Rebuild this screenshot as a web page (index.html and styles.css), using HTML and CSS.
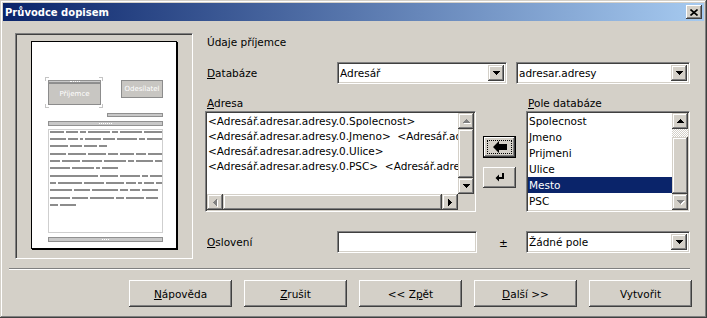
FILE: index.html
```html
<!DOCTYPE html>
<html lang="cs">
<head>
  <meta charset="UTF-8" />
  <title>Průvodce dopisem</title>
  <link rel="stylesheet" href="styles.css">
</head>
<body>

<svg class="defs" width="0" height="0">
  <symbol id="a-down" viewBox="0 0 7 4"><path d="M0 0h7v1H0zM1 1h5v1H1zM2 2h3v1H2zM3 3h1v1H3z"/></symbol>
  <symbol id="a-up" viewBox="0 0 7 4"><path d="M3 0h1v1H3zM2 1h3v1H2zM1 2h5v1H1zM0 3h7v1H0z"/></symbol>
  <symbol id="a-left" viewBox="0 0 4 7"><path d="M0 3h1v1H0zM1 2h1v3H1zM2 1h1v5H2zM3 0h1v7H3z"/></symbol>
  <symbol id="a-right" viewBox="0 0 4 7"><path d="M0 0h1v7H0zM1 1h1v5H1zM2 2h1v3H2zM3 3h1v1H3z"/></symbol>
</svg>

<div class="window">
  <div class="titlebar">
    <span class="title">Průvodce dopisem</span>
    <span class="close"><svg width="8" height="7" viewBox="0 0 8 7"><path d="M0.5 0.5L7.5 6.5M7.5 0.5L0.5 6.5"/></svg></span>
  </div>

  <div class="content">
    <!-- náhled dopisu -->
    <div class="preview">
      <div class="page">
        <div class="marks"></div>
        <div class="bar recip-bar"><i></i></div>
        <div class="box recip-box">Příjemce</div>
        <div class="box sender-box">Odesílatel</div>
        <div class="bar date-bar"></div>
        <div class="bar greet-bar"><i></i></div>
        <div class="text-frame">
          <div class="para">
            <div class="line"><b style="width:14px"></b><b style="width:12px"></b><b style="width:6px"></b><b style="width:22px"></b><b style="width:6px"></b><b style="width:22px"></b><b style="width:18px"></b></div>
            <div class="line"><b style="width:16px"></b><b style="width:10px"></b><b style="width:3px"></b><b style="width:16px"></b><b style="width:12px"></b><b style="width:20px"></b><b style="width:6px"></b><b style="width:15px"></b></div>
            <div class="line"><b style="width:18px"></b><b style="width:12px"></b><b style="width:13px"></b><b style="width:8px"></b></div>
          </div>
          <div class="para">
            <div class="line"><b style="width:16px"></b><b style="width:18px"></b><b style="width:18px"></b><b style="width:10px"></b><b style="width:14px"></b><b style="width:10px"></b><b style="width:14px"></b></div>
            <div class="line"><b style="width:10px"></b><b style="width:18px"></b><b style="width:20px"></b><b style="width:22px"></b><b style="width:6px"></b><b style="width:17px"></b><b style="width:7px"></b></div>
            <div class="line"><b style="width:20px"></b><b style="width:22px"></b><b style="width:4px"></b><b style="width:16px"></b></div>
          </div>
          <div class="para">
            <div class="line"><b style="width:48px"></b><b style="width:18px"></b><b style="width:20px"></b><b style="width:6px"></b><b style="width:12px"></b></div>
            <div class="line"><b style="width:6px"></b><b style="width:24px"></b><b style="width:20px"></b><b style="width:18px"></b><b style="width:10px"></b><b style="width:4px"></b><b style="width:10px"></b><b style="width:6px"></b></div>
            <div class="line"><b style="width:22px"></b><b style="width:16px"></b><b style="width:26px"></b><b style="width:8px"></b><b style="width:10px"></b><b style="width:16px"></b></div>
          </div>
          <div class="para">
            <div class="line"><b style="width:20px"></b><b style="width:16px"></b><b style="width:24px"></b><b style="width:8px"></b><b style="width:18px"></b><b style="width:12px"></b></div>
            <div class="line"><b style="width:8px"></b><b style="width:16px"></b></div>
          </div>
        </div>
        <div class="bar foot-bar"><i></i></div>
      </div>
    </div>

    <div class="form">
      <div class="heading">Údaje příjemce</div>

      <div class="row">
        <span class="label"><u>D</u>atabáze</span>
        <div class="combo combo-db">
          <span class="value">Adresář</span>
          <span class="drop"><svg class="ar" width="7" height="4"><use href="#a-down"/></svg></span>
        </div>
        <div class="combo combo-table">
          <span class="value">adresar.adresy</span>
          <span class="drop"><svg class="ar" width="7" height="4"><use href="#a-down"/></svg></span>
        </div>
      </div>

      <div class="fields">
        <div class="col-address">
          <div class="caption"><u>A</u>dresa</div>
          <div class="listbox address">
            <div class="entries">
              <div>&lt;Adresář.adresar.adresy.0.Spolecnost&gt;</div>
              <div>&lt;Adresář.adresar.adresy.0.Jmeno&gt;&nbsp;&nbsp;&lt;Adresář.adresar.adresy.0.Prijmeni&gt;</div>
              <div>&lt;Adresář.adresar.adresy.0.Ulice&gt;</div>
              <div>&lt;Adresář.adresar.adresy.0.PSC&gt;&nbsp;&nbsp;&lt;Adresář.adresar.adresy.0.Mesto&gt;</div>
            </div>
            <div class="vscroll">
              <span class="sbtn"><svg class="ar off" width="7" height="4"><use href="#a-up"/></svg></span>
              <span class="thumb"></span>
              <span class="sbtn"><svg class="ar" width="7" height="4"><use href="#a-down"/></svg></span>
            </div>
            <div class="hscroll">
              <span class="sbtn"><svg class="ar off" width="4" height="7"><use href="#a-left"/></svg></span>
              <span class="thumb"></span>
              <span class="sbtn"><svg class="ar" width="4" height="7"><use href="#a-right"/></svg></span>
            </div>
            <div class="corner"></div>
          </div>
        </div>

        <div class="col-tools">
          <span class="tool focused">
            <svg width="14" height="12" viewBox="0 0 14 12"><path d="M0 6L6 0V3H14V9H6V12Z"/></svg>
          </span>
          <span class="tool">
            <svg width="9" height="9" viewBox="0 0 9 9"><path d="M7 0H9V6H4V8.5L0.5 5L4 1.5V4H7Z"/></svg>
          </span>
        </div>

        <div class="col-fields">
          <div class="caption"><u>P</u>ole databáze</div>
          <div class="listbox fieldlist">
            <div class="items">
              <div>Spolecnost</div>
              <div>Jmeno</div>
              <div>Prijmeni</div>
              <div>Ulice</div>
              <div class="selected">Mesto</div>
              <div>PSC</div>
            </div>
            <div class="vscroll">
              <span class="sbtn"><svg class="ar" width="7" height="4"><use href="#a-up"/></svg></span>
              <span class="track"></span>
              <span class="thumb"></span>
              <span class="sbtn"><svg class="ar off" width="7" height="4"><use href="#a-down"/></svg></span>
            </div>
          </div>
        </div>
      </div>

      <div class="row row-greeting">
        <span class="label"><u>O</u>slovení</span>
        <div class="textbox"></div>
        <span class="plusminus">±</span>
        <div class="combo combo-greet">
          <span class="value">Žádné pole</span>
          <span class="drop"><svg class="ar" width="7" height="4"><use href="#a-down"/></svg></span>
        </div>
      </div>
    </div>
  </div>

  <div class="separator"></div>

  <div class="buttons">
    <span class="btn"><u>N</u>ápověda</span>
    <span class="btn"><u>Z</u>rušit</span>
    <span class="btn">&lt;&lt; Z<u>p</u>ět</span>
    <span class="btn"><u>D</u>alší &gt;&gt;</span>
    <span class="btn">Vytvořit</span>
  </div>
</div>

</body>
</html>
```

FILE: styles.css
```css
* {
  box-sizing: border-box;
}
body {
  margin: 0;
  font-family: "DejaVu Sans", sans-serif;
  font-size: 10.5px;
  color: #000;
  background: #d4d0c8;
}
u {
  text-decoration: underline;
  text-underline-offset: 1px;
}
.defs {
  position: absolute;
}
.ar {
  display: block;
  fill: #000;
  shape-rendering: crispEdges;
}
.ar.off {
  fill: #808080;
  filter: drop-shadow(1px 1px 0 #fff);
}

/* rámy ve stylu Windows */
.raised {
  box-shadow: inset -1px -1px #404040, inset 1px 1px #fff, inset -2px -2px #808080;
}
.window {
  width: 707px;
  height: 318px;
  padding: 3px;
  background: #d4d0c8;
  box-shadow: inset -1px -1px #404040, inset 1px 1px #d4d0c8, inset -2px -2px #808080, inset 2px 2px #fff;
}
.titlebar {
  height: 18px;
  display: flex;
  align-items: center;
  justify-content: space-between;
  padding: 0 2px;
  background: linear-gradient(to right, #0a246a, #a6caf0);
}
.title {
  color: #fff;
  font-weight: bold;
  font-size: 10px;
}
.close {
  width: 16px;
  height: 14px;
  display: flex;
  align-items: center;
  justify-content: center;
  background: #d4d0c8;
  box-shadow: inset -1px -1px #404040, inset 1px 1px #fff, inset -2px -2px #808080;
}
.close svg {
  stroke: #000;
  stroke-width: 1.6;
}

.content {
  display: flex;
  height: 238px;
  padding: 12px 0 0 12px;
}

/* náhled */
.preview {
  width: 178px;
  height: 226px;
  padding: 7px 0 0 15px;
  border: 1px solid;
  border-color: #808080 #fff #fff #808080;
  box-shadow: inset 1px 1px #404040, inset -1px -1px #d4d0c8;
}
.page {
  position: relative;
  width: 146px;
  height: 208px;
  background: #fff;
  border: 1px solid #000;
  box-shadow: 1px 1px 0 #000;
}
.marks {
  position: absolute;
  left: 13px;
  top: 35px;
  width: 58px;
  height: 31px;
  background:
    linear-gradient(#c4c4c4, #c4c4c4) left top / 4px 1px no-repeat,
    linear-gradient(#c4c4c4, #c4c4c4) left top / 1px 4px no-repeat,
    linear-gradient(#c4c4c4, #c4c4c4) right top / 4px 1px no-repeat,
    linear-gradient(#c4c4c4, #c4c4c4) right top / 1px 4px no-repeat,
    linear-gradient(#c4c4c4, #c4c4c4) left bottom / 4px 1px no-repeat,
    linear-gradient(#c4c4c4, #c4c4c4) left bottom / 1px 4px no-repeat,
    linear-gradient(#c4c4c4, #c4c4c4) right bottom / 4px 1px no-repeat,
    linear-gradient(#c4c4c4, #c4c4c4) right bottom / 1px 4px no-repeat;
}
.bar {
  position: absolute;
  display: flex;
  justify-content: center;
  align-items: center;
  background: #c8c8c8;
  border: 1px solid #909090;
}
.bar i {
  width: 10px;
  border-top: 1px dotted #fff;
}
.recip-bar {
  left: 16px;
  top: 38px;
  width: 53px;
  height: 3px;
}
.date-bar {
  left: 75px;
  top: 71px;
  width: 56px;
  height: 4px;
}
.greet-bar {
  left: 16px;
  top: 79px;
  width: 115px;
  height: 5px;
}
.greet-bar i {
  width: 13px;
}
.foot-bar {
  left: 16px;
  top: 195px;
  width: 115px;
  height: 5px;
}
.foot-bar i {
  width: 7px;
}
.box {
  position: absolute;
  display: flex;
  align-items: center;
  justify-content: center;
  background: #c8c6c2;
  border: 1px solid #8c8c8c;
  color: #fff;
  font-size: 7px;
}
.recip-box {
  left: 16px;
  top: 41px;
  width: 53px;
  height: 22px;
}
.sender-box {
  left: 89px;
  top: 38px;
  width: 42px;
  height: 18px;
}
.text-frame {
  position: absolute;
  left: 16px;
  top: 87px;
  width: 115px;
  height: 104px;
  padding: 1px 0 0 1px;
  border: 1px solid #cfcfcf;
}
.para + .para {
  margin-top: 6px;
}
.line {
  display: flex;
  gap: 2px;
  height: 2px;
}
.line + .line {
  margin-top: 5px;
}
.line b {
  background: #8c8c8c;
}

/* formulář */
.form {
  margin-left: 12px;
  width: 486px;
  display: flex;
  flex-direction: column;
}
.heading {
  margin-top: 2px;
  line-height: 14px;
  padding-left: 2px;
}
.row {
  display: flex;
  align-items: center;
  height: 22px;
  margin-top: 13px;
}
.label {
  width: 132px;
  padding-left: 2px;
}
.combo {
  display: flex;
  height: 22px;
  padding: 2px;
  background: #fff;
  border: 1px solid;
  border-color: #808080 #fff #fff #808080;
  box-shadow: inset 1px 1px #404040, inset -1px -1px #d4d0c8;
}
.combo .value {
  flex: 1;
  padding-left: 0;
  line-height: 16px;
  white-space: nowrap;
}
.drop, .sbtn {
  display: flex;
  align-items: center;
  justify-content: center;
  width: 16px;
  height: 16px;
  flex: none;
  background: #d4d0c8;
  box-shadow: inset -1px -1px #404040, inset 1px 1px #d4d0c8, inset -2px -2px #808080, inset 2px 2px #fff;
}
.drop {
  height: 16px;
}
.combo-db {
  width: 170px;
}
.combo-table {
  width: 174px;
  margin-left: 9px;
}
.combo-greet {
  width: 164px;
}

.fields {
  display: flex;
  margin-top: 12px;
}
.caption {
  line-height: 14px;
  margin-bottom: 1px;
  padding-left: 2px;
}
.col-address {
  width: 271px;
}
.col-tools {
  width: 33px;
  margin-left: 7px;
  padding-top: 40px;
  display: flex;
  flex-direction: column;
}
.col-fields {
  width: 164px;
  margin-left: 10px;
}
.listbox {
  display: grid;
  height: 101px;
  padding: 1px;
  background: #fff;
  border: 1px solid;
  border-color: #808080 #fff #fff #808080;
  box-shadow: inset 1px 1px #404040, inset -1px -1px #d4d0c8;
}
.address {
  grid-template-columns: 1fr 16px;
  grid-template-rows: 1fr 16px;
}
.entries {
  padding: 1px 0 0 1px;
  line-height: 15px;
  white-space: nowrap;
  overflow: hidden;
}
.vscroll {
  display: flex;
  flex-direction: column;
  background: #d4d0c8;
}
.hscroll {
  display: flex;
  background: #d4d0c8;
}
.thumb {
  flex: 1;
  background: #d4d0c8;
  box-shadow: inset -1px -1px #404040, inset 1px 1px #d4d0c8, inset -2px -2px #808080, inset 2px 2px #fff;
}
.track {
  height: 8px;
  flex: none;
  background: repeating-conic-gradient(#fff 0 25%, #d4d0c8 0 50%) 0 0 / 2px 2px;
}
.corner {
  background: #d4d0c8;
}
.fieldlist {
  grid-template-columns: 1fr 16px;
}
.items {
  line-height: 16px;
  overflow: hidden;
}
.items div {
  padding-left: 1px;
}
.items .selected {
  background: #0a246a;
  color: #fff;
}

.tool {
  display: flex;
  align-items: center;
  justify-content: center;
  width: 33px;
  height: 21px;
  background: #d4d0c8;
  box-shadow: inset -1px -1px #404040, inset 1px 1px #fff, inset -2px -2px #808080;
}
.tool svg {
  fill: #000;
}
.tool.focused {
  height: 22px;
  margin-bottom: 9px;
  border: 1px solid #000;
  outline: 1px dotted #000;
  outline-offset: -5px;
}

.row-greeting {
  margin-top: 19px;
}
.textbox {
  width: 140px;
  height: 22px;
  background: #fff;
  border: 1px solid;
  border-color: #808080 #fff #fff #808080;
  box-shadow: inset 1px 1px #404040, inset -1px -1px #d4d0c8;
}
.plusminus {
  width: 49px;
  padding-left: 22px;
  padding-top: 2px;
}

/* spodní tlačítka */
.separator {
  height: 2px;
  margin: 9px 14px 0 6px;
  border-top: 1px solid #808080;
  border-bottom: 1px solid #fff;
}
.buttons {
  display: flex;
  justify-content: flex-end;
  gap: 12px;
  margin-top: 10px;
  padding-right: 12px;
}
.btn {
  width: 103px;
  height: 27px;
  display: flex;
  align-items: center;
  justify-content: center;
  background: #d4d0c8;
  box-shadow: inset -1px -1px #404040, inset 1px 1px #fff, inset -2px -2px #808080;
}
```
